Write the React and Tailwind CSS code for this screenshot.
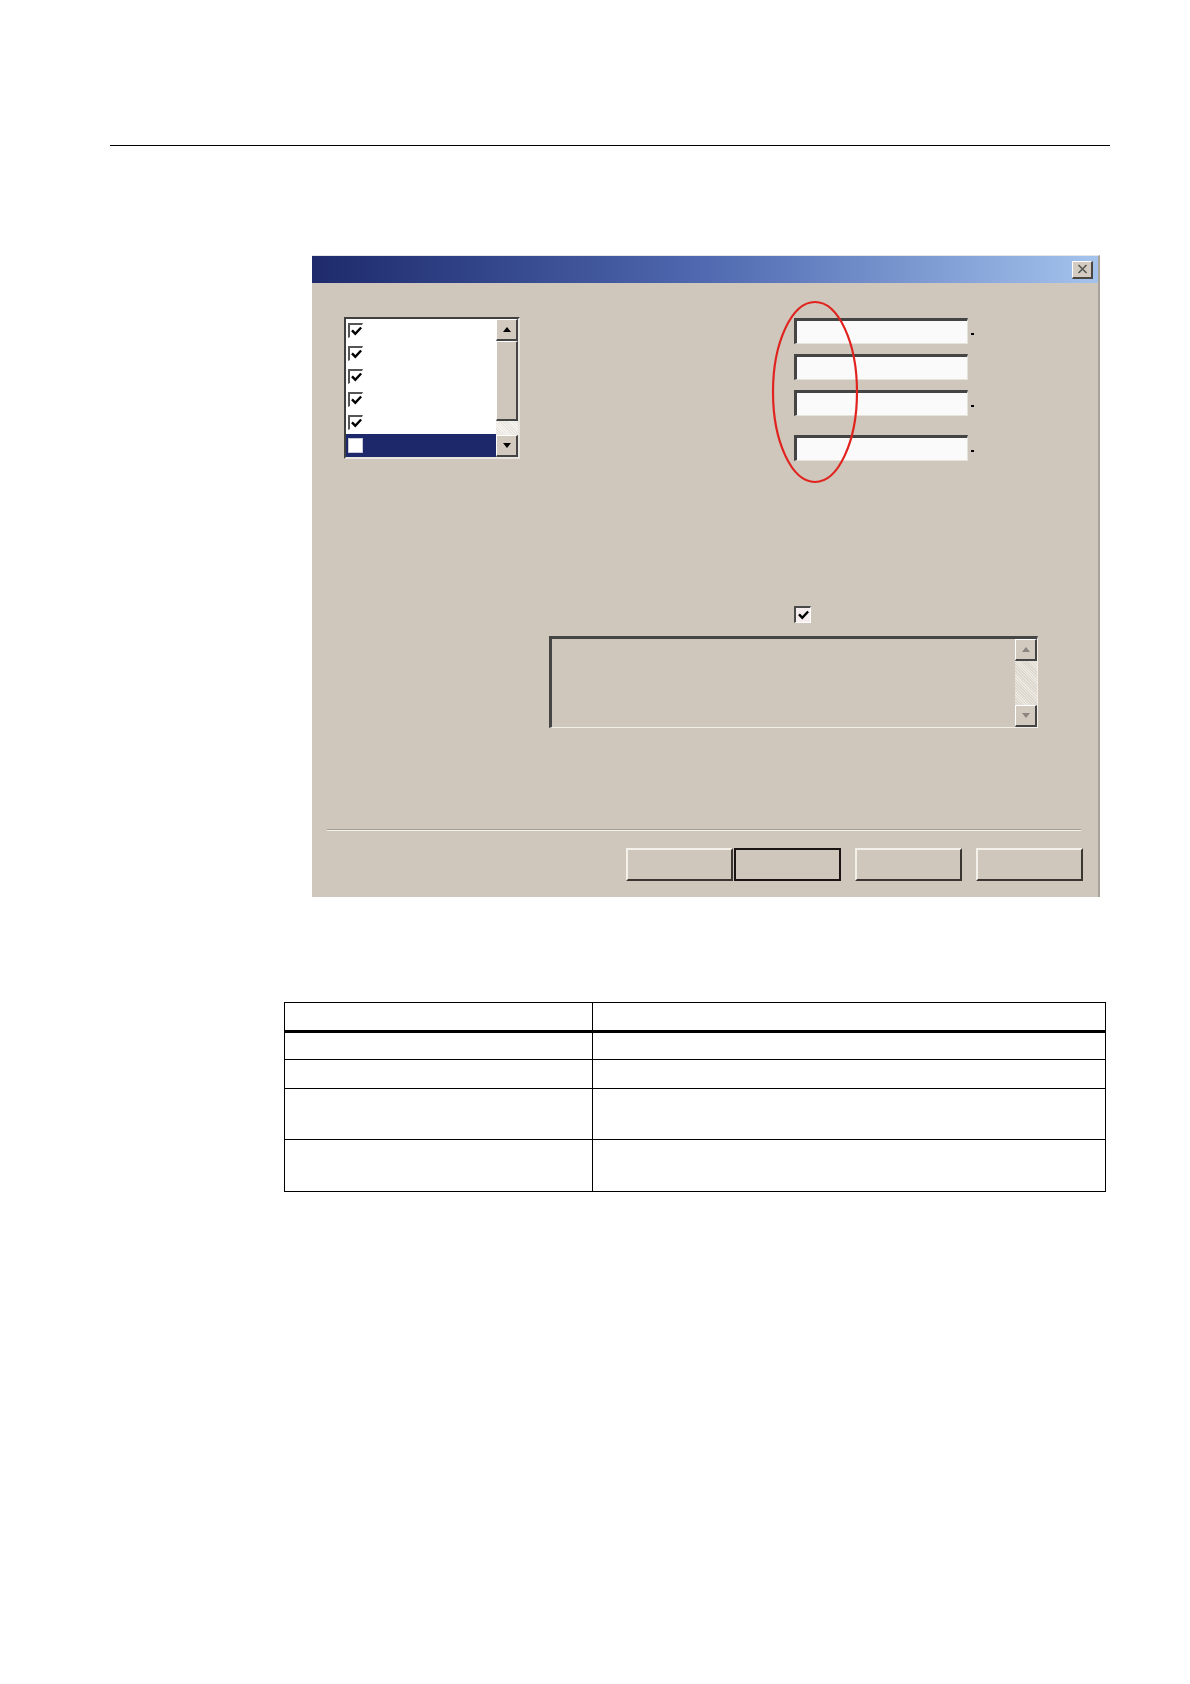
import React from "react";

function Check({ className = "" }) {
  return (
    <svg viewBox="0 0 11 11" className={className}>
      <polyline points="1.8,5.2 4.3,7.8 9.3,2.4" fill="none" stroke="#000" strokeWidth="2.4" strokeLinecap="square" />
    </svg>
  );
}

function CheckBox({ checked = true }) {
  return (
    <div className="w-[15px] h-[15px] border-t-2 border-l-2 border-t-[#555] border-l-[#555] border-b border-r border-b-white border-r-white bg-white flex items-center justify-center">
      {checked && <Check className="w-[11px] h-[11px]" />}
    </div>
  );
}

function ArrowBtn({ dir = "up", disabled = false, h = "h-[22px]" }) {
  const color = disabled ? "#8a8580" : "#000";
  return (
    <div className={`w-[22px] ${h} bg-[#d2cabe] border-t border-l border-t-white border-l-white border-b-2 border-r-2 border-b-[#444] border-r-[#444] flex items-center justify-center`}>
      <svg viewBox="0 0 8 5" className="w-[8px] h-[5px]">
        {dir === "up" ? (
          <path d="M0 5 L4 0 L8 5 Z" fill={color} />
        ) : (
          <path d="M0 0 L4 5 L8 0 Z" fill={color} />
        )}
      </svg>
    </div>
  );
}

function TextField() {
  return (
    <div className="w-[174px] h-[26px] bg-[#fbfafa] border-t-[3px] border-l-[3px] border-t-[#444] border-l-[#444] border-b border-r border-b-[#e6e2dc] border-r-[#e6e2dc]" />
  );
}

function Button({ def = false }) {
  return def ? (
    <div className="w-[107px] h-[33px] border-2 border-[#1a1414] bg-[#cfc7bb]" />
  ) : (
    <div className="w-[107px] h-[33px] bg-[#cfc7bb] border-t-2 border-l-2 border-t-[#f4f0ea] border-l-[#f4f0ea] border-b-2 border-r-2 border-b-[#3a3530] border-r-[#3a3530]" />
  );
}

export default function App() {
  const rows = [true, true, true, true, true, false];
  return (
    <div className="w-[1190px] h-[1684px] bg-white overflow-hidden">
      <div className="ml-[110px] mt-[145px] w-[1000px] h-px bg-black" />

      {/* Dialog */}
      <div className="ml-[312px] mt-[109px] w-[788px] h-[642px] bg-[#cfc7bb] border-t border-t-[#e8e6e2] border-r-2 border-r-[#a8a298] relative">
        {/* Title bar */}
        <div className="h-[27px] bg-gradient-to-r from-[#1e2a6c] via-[#5069b0] to-[#a4c3ec] flex items-center justify-end pr-[5px]">
          <div className="w-[21px] h-[18px] bg-[#d4ccc2] border-t border-l border-t-white border-l-white border-b-2 border-r-2 border-b-[#4a4540] border-r-[#4a4540] flex items-center justify-center">
            <svg viewBox="0 0 10 10" className="w-[11px] h-[10px]">
              <path d="M1 1 L9 9 M9 1 L1 9" stroke="#555" strokeWidth="1.6" />
            </svg>
          </div>
        </div>

        {/* Top section */}
        <div className="flex items-start">
          {/* Listbox */}
          <div className="ml-[32px] mt-[34px] w-[176px] h-[142px] bg-white border-t-2 border-l-2 border-t-[#404040] border-l-[#404040] border-b-2 border-r-2 border-b-[#e8e4de] border-r-[#e8e4de] flex">
            <div className="flex-1 flex flex-col">
              {rows.map((c, i) => (
                <div
                  key={i}
                  className={`h-[23px] flex items-center pl-[2px] ${c ? "bg-white" : "bg-[#1c2869]"}`}
                >
                  {c ? (
                    <CheckBox checked />
                  ) : (
                    <div className="w-[15px] h-[15px] bg-white border border-[#c8c8d8]" />
                  )}
                </div>
              ))}
            </div>
            <div className="w-[22px] flex flex-col bg-[#e4e0da]">
              <ArrowBtn dir="up" />
              <div className="h-[80px] bg-[#cfc7bb] border-t border-l border-t-white border-l-white border-b-2 border-r-2 border-b-[#444] border-r-[#444]" />
              <div className="flex-1 bg-[repeating-linear-gradient(45deg,#e8e4de_0px,#e8e4de_1px,#f6f4f0_1px,#f6f4f0_2px)]" />
              <ArrowBtn dir="down" />
            </div>
          </div>

          {/* Text fields */}
          <div className="ml-[274px] mt-[35px] flex flex-col">
            <div className="flex items-center">
              <TextField />
              <div className="ml-[3px] mt-[6px] w-[3px] h-[2px] bg-black" />
            </div>
            <div className="mt-[10px] flex items-center">
              <TextField />
            </div>
            <div className="mt-[10px] flex items-center">
              <TextField />
              <div className="ml-[3px] mt-[6px] w-[3px] h-[2px] bg-black" />
            </div>
            <div className="mt-[19px] flex items-center">
              <TextField />
              <div className="ml-[3px] mt-[6px] w-[3px] h-[2px] bg-black" />
            </div>
          </div>
        </div>

        {/* Checkbox */}
        <div className="ml-[482px] mt-[145px] w-[17px] h-[17px] border-t-2 border-l-2 border-t-[#4a4a4a] border-l-[#4a4a4a] border-b border-r border-b-white border-r-white bg-[#f6eeee] flex items-center justify-center">
          <Check className="w-[11px] h-[11px]" />
        </div>

        {/* Textarea */}
        <div className="ml-[237px] mt-[13px] w-[489px] h-[92px] border-t-[3px] border-l-[3px] border-t-[#454545] border-l-[#454545] border-b border-r border-b-[#f2eee8] border-r-[#f2eee8] flex justify-end">
          <div className="w-[22px] flex flex-col">
            <ArrowBtn dir="up" disabled />
            <div className="flex-1 bg-[repeating-linear-gradient(45deg,#dcd6cc_0px,#dcd6cc_1px,#ece8e2_1px,#ece8e2_2px)]" />
            <ArrowBtn dir="down" disabled />
          </div>
        </div>

        {/* Separator */}
        <div className="ml-[15px] mr-[17px] mt-[101px] h-[2px] border-t border-t-[#a49e94] border-b border-b-[#f4f0ea]" />

        {/* Buttons */}
        <div className="mt-[17px] pr-[15px] flex justify-end">
          <Button />
          <div className="ml-[1px]">
            <Button def />
          </div>
          <div className="ml-[14px]">
            <Button />
          </div>
          <div className="ml-[14px]">
            <Button />
          </div>
        </div>

        {/* Red annotation ellipse */}
        <svg
          className="absolute left-[458px] top-[43px] w-[90px] h-[186px] pointer-events-none"
          viewBox="0 0 90 186"
        >
          <ellipse cx="45" cy="93" rx="42" ry="90" fill="none" stroke="#e0231f" strokeWidth="2.2" />
        </svg>
      </div>

      {/* Table */}
      <div className="ml-[284px] mt-[105px] w-[822px] border border-black">
        <div className="flex h-[27px]">
          <div className="w-[308px] border-r border-black" />
          <div className="flex-1" />
        </div>
        <div className="h-[3px] bg-black" />
        <div className="flex h-[27px] border-b border-black">
          <div className="w-[308px] border-r border-black" />
          <div className="flex-1" />
        </div>
        <div className="flex h-[29px] border-b border-black">
          <div className="w-[308px] border-r border-black" />
          <div className="flex-1" />
        </div>
        <div className="flex h-[51px] border-b border-black">
          <div className="w-[308px] border-r border-black" />
          <div className="flex-1" />
        </div>
        <div className="flex h-[51px]">
          <div className="w-[308px] border-r border-black" />
          <div className="flex-1" />
        </div>
      </div>
    </div>
  );
}
